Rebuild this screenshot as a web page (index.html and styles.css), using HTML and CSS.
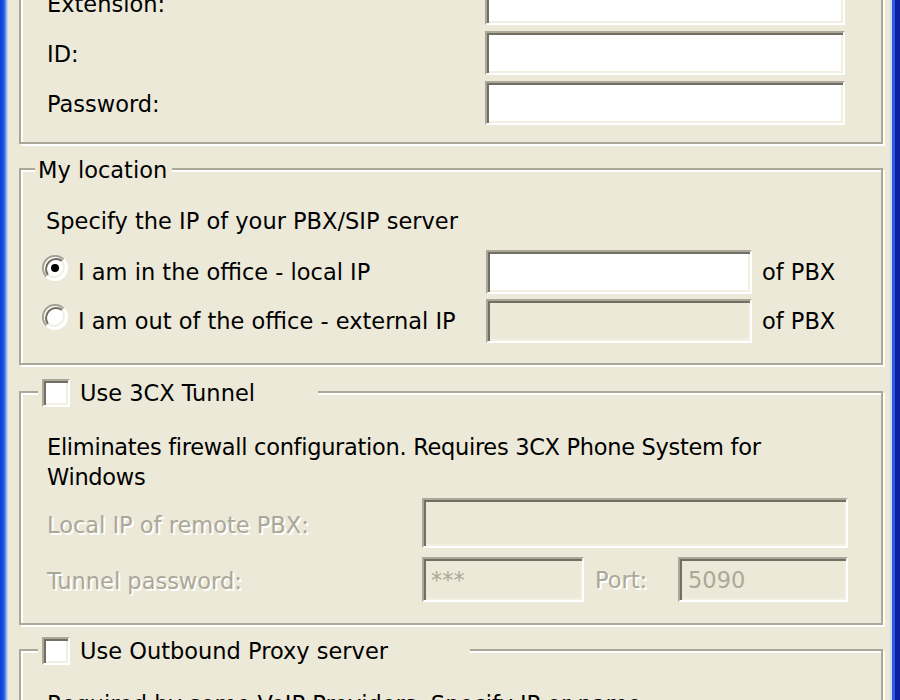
FILE: index.html
```html
<!DOCTYPE html>
<html>
<head>
<meta charset="utf-8">
<link rel="stylesheet" href="styles.css">
</head>
<body>
<div class="window">
  <div class="frame-left"></div>
  <div class="dialog">
    <div class="group g1">
      <div class="field-row">
        <div class="field-label">Extension:</div>
        <div class="input wide"></div>
      </div>
      <div class="field-row">
        <div class="field-label">ID:</div>
        <div class="input wide"></div>
      </div>
      <div class="field-row">
        <div class="field-label">Password:</div>
        <div class="input wide"></div>
      </div>
    </div>

    <div class="group g2">
      <div class="legend text-legend">My location</div>
      <div class="desc">Specify the IP of your PBX/SIP server</div>
      <div class="radio-rows">
        <div class="radio-row">
          <div class="radio-label">
            <svg class="radio" width="26" height="26" viewBox="0 0 26 26">
              <circle cx="13" cy="13" r="11.5" fill="#fff"/>
              <path d="M4.5 21.5 A12 12 0 0 1 21.5 4.5" fill="none" stroke="#a4a294" stroke-width="2"/>
              <path d="M6 20 A10 10 0 0 1 20 6" fill="none" stroke="#6f6d62" stroke-width="2"/>
              <path d="M21.5 4.5 A12 12 0 0 1 4.5 21.5" fill="none" stroke="#ffffff" stroke-width="2"/>
              <path d="M20 6 A10 10 0 0 1 6 20" fill="none" stroke="#f1efe2" stroke-width="2"/>
              <circle cx="13" cy="13" r="4" fill="#000"/>
            </svg>
            <span>I am in the office - local IP</span>
          </div>
          <div class="input ip"></div>
          <span class="suffix">of PBX</span>
        </div>
        <div class="radio-row">
          <div class="radio-label">
            <svg class="radio" width="26" height="26" viewBox="0 0 26 26">
              <circle cx="13" cy="13" r="11.5" fill="#fff"/>
              <path d="M4.5 21.5 A12 12 0 0 1 21.5 4.5" fill="none" stroke="#a4a294" stroke-width="2"/>
              <path d="M6 20 A10 10 0 0 1 20 6" fill="none" stroke="#6f6d62" stroke-width="2"/>
              <path d="M21.5 4.5 A12 12 0 0 1 4.5 21.5" fill="none" stroke="#ffffff" stroke-width="2"/>
              <path d="M20 6 A10 10 0 0 1 6 20" fill="none" stroke="#f1efe2" stroke-width="2"/>
            </svg>
            <span>I am out of the office - external IP</span>
          </div>
          <div class="input ip disabled"></div>
          <span class="suffix">of PBX</span>
        </div>
      </div>
    </div>

    <div class="group g3">
      <div class="legend check-legend tunnel-legend">
        <span class="check"></span>
        <span>Use 3CX Tunnel</span>
      </div>
      <div class="desc2 tight">Eliminates firewall configuration. Requires 3CX Phone System for<br>Windows</div>
      <div class="tunnel-row first">
        <div class="tunnel-label dis">Local IP of remote PBX:</div>
        <div class="input disabled remote"></div>
      </div>
      <div class="tunnel-row second">
        <div class="tunnel-label dis">Tunnel password:</div>
        <div class="input disabled pass"><span class="value stars">***</span></div>
        <div class="port-label dis">Port:</div>
        <div class="input disabled port"><span class="value">5090</span></div>
      </div>
    </div>

    <div class="group g4">
      <div class="legend check-legend proxy-legend">
        <span class="check"></span>
        <span>Use Outbound Proxy server</span>
      </div>
      <div class="desc2">Required by some VoIP Providers. Specify IP or name</div>
    </div>
  </div>
  <div class="frame-right"></div>
</div>
</body>
</html>
```

FILE: styles.css
```css
html, body {
  margin: 0;
  padding: 0;
  height: 700px;
  overflow: hidden;
  background: #ece9d8;
}

.window {
  display: flex;
  height: 700px;
  font-family: "DejaVu Sans", sans-serif;
  font-size: 22.5px;
  color: #000;
}

.frame-left {
  flex: none;
  width: 8px;
  background: linear-gradient(to right, #0a3cd2 0px, #1d5de6 4px, #7aa6ef 6px, #dfe8f6 8px);
}

.dialog {
  flex: none;
  width: 882px;
  box-sizing: border-box;
  padding-left: 11px;
  background: #ece9d8;
}

.frame-right {
  flex: 1;
  background: linear-gradient(to right, #d3dcef 0, #d3dcef 2px, #2d5ce2 2px, #2d5ce2 5px, #0b219f 5px);
}

.group {
  position: relative;
  box-sizing: border-box;
  width: 864px;
  border: 2px solid #aca899;
  box-shadow: inset 2px 2px 0 #fff, 2px 2px 0 #fff;
  padding-left: 26px;
}

.g1 {
  border-top: none;
  margin-top: -19px;
  padding-bottom: 17px;
  display: flex;
  flex-direction: column;
  gap: 6px;
}

.field-row {
  display: flex;
  align-items: center;
  height: 44px;
}

.field-label {
  width: 438px;
  flex: none;
  padding-top: 2px;
}

.input {
  box-sizing: border-box;
  flex: none;
  height: 44px;
  background: #fff;
  border: 2px solid;
  border-color: #aca899 #fff #fff #aca899;
  box-shadow: inset 2px 2px 0 #716f64, inset -2px -2px 0 #f1efe2;
  display: flex;
  align-items: center;
}

.input.wide { width: 360px; }
.input.ip { width: 266px; }
.input.disabled { background: #ece9d8; }

.legend {
  position: absolute;
  top: -14px;
  height: 28px;
  box-sizing: border-box;
  background: #ece9d8;
  display: flex;
  align-items: center;
  line-height: 28px;
}

.text-legend {
  left: 14px;
  padding: 0 5px 0 3px;
}

.check-legend {
  left: 17px;
  padding-left: 4px;
}

.tunnel-legend { width: 280px; }
.proxy-legend { width: 432px; }

.check {
  flex: none;
  width: 28px;
  height: 28px;
  box-sizing: border-box;
  background: #fff;
  border: 2px solid;
  border-color: #aca899 #fff #fff #aca899;
  box-shadow: inset 2px 2px 0 #716f64, inset -2px -2px 0 #f1efe2;
  margin-right: 10px;
}

.g2 {
  margin-top: 24px;
  height: 197px;
  padding-top: 37px;
}

.desc {
  line-height: 28px;
  margin-left: -1px;
  white-space: nowrap;
}

.radio-rows {
  margin-top: 15px;
  margin-left: -5px;
  display: flex;
  flex-direction: column;
  gap: 5px;
}

.radio-row {
  display: flex;
  align-items: center;
  height: 44px;
}

.radio-label {
  flex: none;
  width: 444px;
  display: flex;
  align-items: center;
  white-space: nowrap;
}

.radio {
  flex: none;
  margin-right: 10px;
  margin-bottom: 8px;
}

.suffix {
  margin-left: 10px;
  white-space: nowrap;
}

.g3 {
  margin-top: 26px;
  height: 234px;
  padding-top: 39px;
}

.desc2 {
  line-height: 30px;
  white-space: nowrap;
}

.desc2.tight {
  letter-spacing: -0.3px;
}

.tunnel-row {
  display: flex;
  align-items: center;
}

.tunnel-row.first { margin-top: 6px; }
.tunnel-row.second { margin-top: 9px; }

.tunnel-label {
  flex: none;
  width: 375px;
  white-space: nowrap;
  padding-top: 3px;
}

.dis {
  color: #aca899;
  text-shadow: 2px 2px 0 #fff;
}

.input.remote { width: 426px; height: 50px; }
.input.pass { width: 162px; height: 45px; }
.input.port { width: 170px; height: 45px; }

.port-label {
  flex: none;
  box-sizing: border-box;
  width: 94px;
  padding-left: 11px;
}

.value {
  color: #aca899;
  padding-left: 8px;
}

.stars {
  padding-left: 7px;
}

.g4 {
  margin-top: 24px;
  height: 200px;
  padding-top: 38px;
}
```
